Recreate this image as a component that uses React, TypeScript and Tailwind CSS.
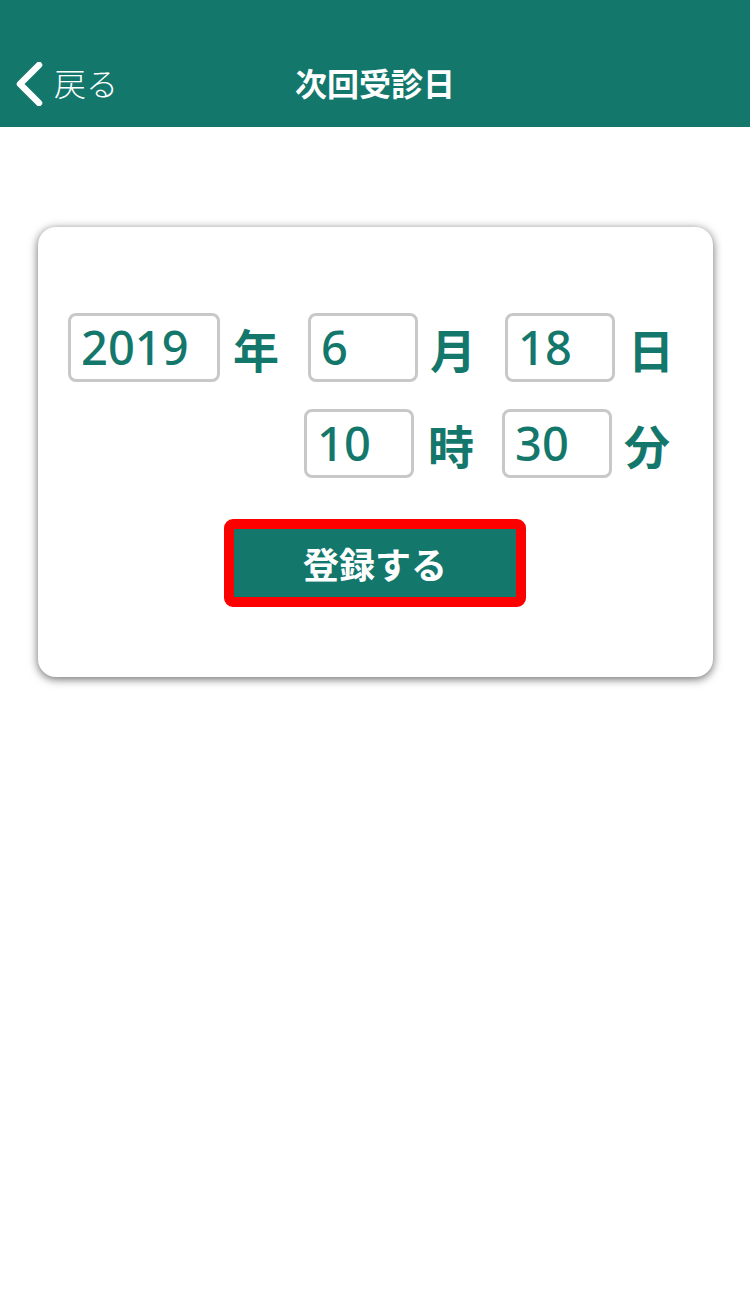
const font = { fontFamily: '"Noto Sans CJK JP", "Noto Sans", sans-serif' };
const digits = { fontFamily: '"Noto Sans", "Noto Sans CJK JP", sans-serif' };

function Field({ value, width }: { value: string; width: string }) {
  return (
    <div
      className={`${width} shrink-0 h-[69px] border-[3px] border-[#c8c8c8] rounded-[8px] flex items-center pl-[10px] text-[47px] font-medium text-[#14776c] leading-none`}
      style={digits}
    >
      {value}
    </div>
  );
}

function Label({ text }: { text: string }) {
  return <span className="w-[46px] shrink-0 text-[46px] font-bold text-[#14776c] leading-none">{text}</span>;
}

export default function App() {
  return (
    <div className="w-[750px] h-[1293px] bg-white" style={font}>
      {/* HEADER */}
      <div className="bg-[#14776c] h-[127px] pt-[40px]">
        <div className="relative h-[87px] flex items-center justify-center">
          <div className="absolute left-[14px] top-0 h-full flex items-center text-white">
            <svg width="30" height="44" viewBox="0 0 30 44" fill="none">
              <polyline points="25,3 6,22 25,41" stroke="white" strokeWidth="6.5" strokeLinecap="round" strokeLinejoin="round" />
            </svg>
            <span className="text-[32px] font-light ml-[10px] -mt-[4px]">戻る</span>
          </div>
          <h1 className="text-white text-[32px] font-bold -mt-[4px]">次回受診日</h1>
        </div>
      </div>

      {/* CARD */}
      <div className="ml-[38px] mt-[100px] w-[675px] h-[450px] bg-white rounded-[18px] shadow-[0_2px_10px_rgba(0,0,0,0.6)] pt-[86px]">
        <div className="flex items-center pl-[30px]">
          <Field value="2019" width="w-[152px]" />
          <span className="ml-[13px] flex shrink-0"><Label text="年" /></span>
          <span className="ml-[29px] flex shrink-0"><Field value="6" width="w-[110px]" /></span>
          <span className="ml-[12px] flex shrink-0"><Label text="月" /></span>
          <span className="ml-[29px] flex shrink-0"><Field value="18" width="w-[110px]" /></span>
          <span className="ml-[13px] flex shrink-0"><Label text="日" /></span>
        </div>
        <div className="flex items-center justify-end mt-[27px] pr-[43px]">
          <Field value="10" width="w-[110px]" />
          <span className="ml-[14px] flex shrink-0"><Label text="時" /></span>
          <span className="ml-[28px] flex shrink-0"><Field value="30" width="w-[110px]" /></span>
          <span className="ml-[12px] flex shrink-0"><Label text="分" /></span>
        </div>
        <div className="mt-[41px] pl-[186px]">
          <button className="w-[302px] h-[88px] border-[10px] border-[#ff0000] rounded-[9px] bg-[#14776c] text-white text-[36px] font-bold flex items-center justify-center">
            登録する
          </button>
        </div>
      </div>
    </div>
  );
}
